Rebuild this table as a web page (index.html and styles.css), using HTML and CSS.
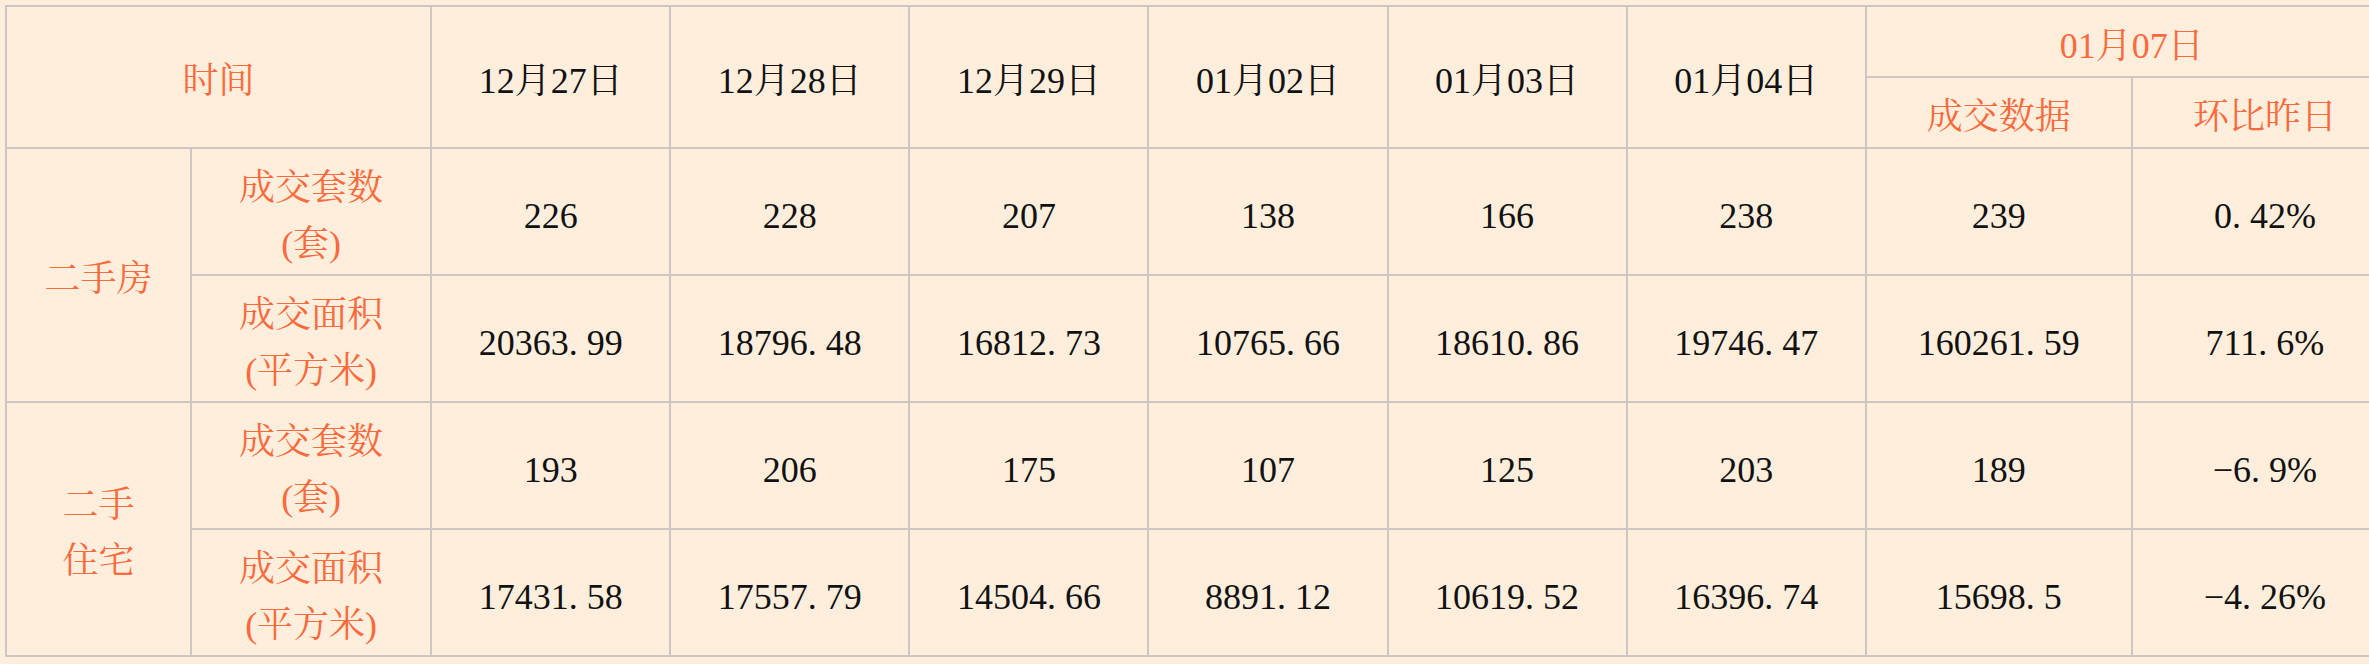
FILE: index.html
```html
<!DOCTYPE html>
<html lang="zh-CN">
<head>
<meta charset="utf-8">
<title>成交数据</title>
<link rel="stylesheet" href="styles.css">
</head>
<body>
<table class="data">
  <colgroup>
    <col class="c-cat"><col class="c-item">
    <col class="c-day"><col class="c-day"><col class="c-day"><col class="c-day"><col class="c-day"><col class="c-day">
    <col class="c-wide"><col class="c-wide">
  </colgroup>
  <tr class="h1">
    <th class="hl" colspan="2" rowspan="2">时间</th>
    <th rowspan="2">12月27日</th>
    <th rowspan="2">12月28日</th>
    <th rowspan="2">12月29日</th>
    <th rowspan="2">01月02日</th>
    <th rowspan="2">01月03日</th>
    <th rowspan="2">01月04日</th>
    <th class="hl" colspan="2">01月07日</th>
  </tr>
  <tr class="h2">
    <th class="hl">成交数据</th>
    <th class="hl">环比昨日</th>
  </tr>
  <tr class="r">
    <td class="hl" rowspan="2">二手房</td>
    <td class="hl">成交套数<br>(套)</td>
    <td>226</td><td>228</td><td>207</td><td>138</td><td>166</td><td>238</td><td>239</td><td>0. 42%</td>
  </tr>
  <tr class="r">
    <td class="hl">成交面积<br>(平方米)</td>
    <td>20363. 99</td><td>18796. 48</td><td>16812. 73</td><td>10765. 66</td><td>18610. 86</td><td>19746. 47</td><td>160261. 59</td><td>711. 6%</td>
  </tr>
  <tr class="r">
    <td class="hl" rowspan="2">二手<br>住宅</td>
    <td class="hl">成交套数<br>(套)</td>
    <td>193</td><td>206</td><td>175</td><td>107</td><td>125</td><td>203</td><td>189</td><td>−6. 9%</td>
  </tr>
  <tr class="r">
    <td class="hl">成交面积<br>(平方米)</td>
    <td>17431. 58</td><td>17557. 79</td><td>14504. 66</td><td>8891. 12</td><td>10619. 52</td><td>16396. 74</td><td>15698. 5</td><td>−4. 26%</td>
  </tr>
</table>
</body>
</html>
```
FILE: styles.css
```css
html, body {
  margin: 0;
  background: #ffeedc;
  overflow: hidden;
}
body {
  padding: 5px 0 0 5px;
}
.data {
  border-collapse: collapse;
  table-layout: fixed;
  width: 2394px;
  font-family: "Liberation Serif", "Noto Serif CJK SC", "Noto Sans CJK SC", serif;
  font-size: 36px;
  line-height: 56px;
  color: #111;
}
.c-cat { width: 185px; }
.c-item { width: 240px; }
.c-day { width: 239px; }
.c-wide { width: 266px; }
.data th, .data td {
  border: 2px solid #cdc6c3;
  padding: 8px 0 0;
  text-align: center;
  vertical-align: middle;
  font-weight: normal;
}
.h1 { height: 71px; }
.h2 { height: 71px; }
.r { height: 127px; }
.hl {
  color: #fb6a3d;
}
```
